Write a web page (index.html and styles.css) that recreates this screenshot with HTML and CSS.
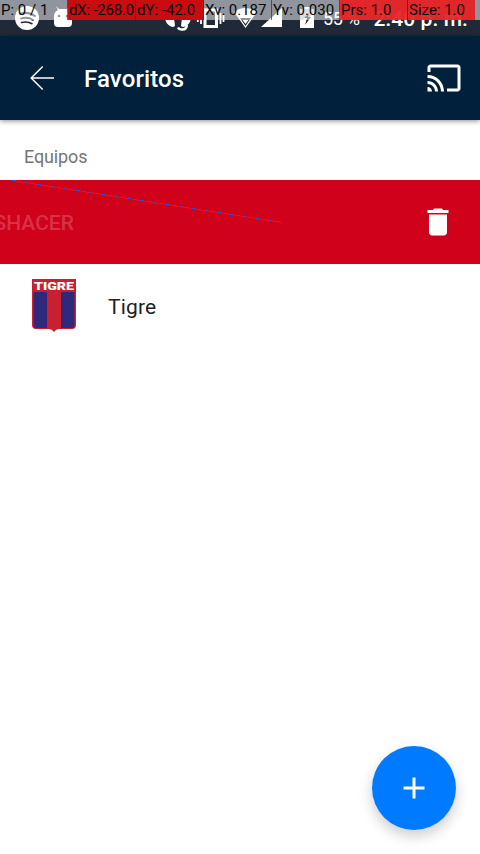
FILE: index.html
```html
<!DOCTYPE html>
<html lang="es">
<head>
<meta charset="utf-8">
<title>Favoritos</title>
<link rel="stylesheet" href="styles.css">
</head>
<body>
<div class="screen">
  <div class="status">
    <svg class="status-icons" viewBox="0 0 480 36" width="480" height="36" fill="#fff">
      <circle cx="27" cy="18" r="12"/>
      <g fill="none" stroke="#202938" stroke-linecap="round"><path d="M20 14q8-3 15 2" stroke-width="2"/><path d="M21 18.500q7-2 12 1.500" stroke-width="1.800"/><path d="M21.500 22.500q6-1.500 10.500 1.200" stroke-width="1.600"/></g>
      <path d="M54 16q0-4 4-6l-2-4 3 3h8l3-3-2 4q4 2 4 6v7q0 4-4 4H58q-4 0-4-4z"/><g fill="#202938"><circle cx="59" cy="16" r="1.300"/><circle cx="67" cy="16" r="1.300"/></g>
      <path d="M165 17h8q2 4 2 9-2 1.500-4 .5-6-3-6-9.500zM191 17h-8q-2 4-2 9 2 1.500 4 .5 6-3 6-9.500z"/>
      <path d="M187 25q-1 5-5 4.500-3 0-4-2" fill="none" stroke="#fff" stroke-width="2.500"/>
      <path d="M205 10h11.500v16.500H205z" fill="none" stroke="#fff" stroke-width="3"/><path d="M201 13v11M197.800 15v7M220.500 13v11M223.500 15v7" stroke="#fff" stroke-width="1.800"/>
      <path d="M234 12q11-8 23 0l-11.500 16z"/><path d="M240 18h11l-5.500 8z" fill="#202938"/><path d="M242.500 20h6l-3 4z"/>
      <path d="M282 8v19h-21z"/>
      <path d="M300 9h3V7h8v2h3v19h-14z"/><path d="M300 9h14v3l-5 6h-3l2-5-5 7h-3z" fill="#202938" fill-opacity=".3"/><path d="M304 18h3l-2 7 6-8h-3l1-4z" fill="#202938"/>
    </svg>
    <span class="battery">55 %</span>
    <span class="clock">2:40 p. m.</span>
    <div class="debug">
      <span>P: 0 / 1</span><span class="red tight">dX: -268.0</span><span class="red">dY: -42.0</span><span>Xv: 0.187</span><span>Yv: 0.030</span><span class="bright">Prs: 1.0</span><span class="bright">Size: 1.0</span>
    </div>
  </div>
  <header class="bar">
    <svg class="back" width="26" height="26" viewBox="0 0 26 26" fill="none" stroke="#fff" stroke-width="1.500"><path d="M24 13H1.500M12.700 1.500L1.200 13l11.500 11.500"/></svg>
    <h1>Favoritos</h1>
    <svg class="cast" width="36" height="36" viewBox="0 0 24 24" fill="#fff"><path d="M21 3H3c-1.100 0-2 .9-2 2v3h2V5h18v14h-7v2h7c1.100 0 2-.9 2-2V5c0-1.100-.9-2-2-2zM1 18v3h3c0-1.660-1.340-3-3-3zm0-4v2c2.760 0 5 2.240 5 5h2c0-3.870-3.130-7-7-7zm0-4v2c4.970 0 9 4.030 9 9h2c0-6.080-4.930-11-11-11z"/></svg>
  </header>
  <main>
    <h2>Equipos</h2>
    <div class="swiped">
      <span class="undo">DESHACER</span>
      <svg class="trash" width="36" height="36" viewBox="0 0 24 24" fill="#fff"><path d="M6 19c0 1.100.9 2 2 2h8c1.100 0 2-.9 2-2V7H6v12zM19 4h-3.500l-1-1h-5l-1 1H5v2h14V4z"/></svg>
      <svg class="trace" width="300" height="50" viewBox="0 0 300 50" fill="none" shape-rendering="crispEdges"><path d="M12 .5L282 42.500" stroke="#ff0010" stroke-width="1.100"/><path d="M12 .5L282 42.500" stroke="#1458ee" stroke-width="1.100" stroke-dasharray="3 3.500"/></svg>
    </div>
    <div class="team">
      <svg class="crest" width="44" height="54" viewBox="0 0 44 54"><path d="M0 0h44v46q0 4-4 4H27q-3 0-5 3-2-3-5-3H4q-4 0-4-4z" fill="#c92030"/><path d="M1.500 13H15v36H4q-2.500 0-2.500-3zM29 13h13.500v33q0 3-2.500 3H29z" fill="#30297b"/><text x="2" y="11" textLength="40" lengthAdjust="spacingAndGlyphs">TIGRE</text></svg>
      <span>Tigre</span>
    </div>
  </main>
  <button class="fab" aria-label="Agregar"><svg width="36" height="36" viewBox="0 0 36 36"><path d="M18 7.500v21M7.500 18h21" stroke="#fff" stroke-width="3"/></svg></button>
</div>
</body>
</html>
```
FILE: styles.css
```css
* { box-sizing: border-box; }
body { margin: 0; background: #fff; font-family: Roboto, "Liberation Sans", sans-serif; }
.screen { position: relative; width: 480px; height: 854px; overflow: hidden; display: flex; flex-direction: column; }
.status { position: relative; height: 36px; background: #202938; color: #fff; flex: none; }
.status-icons { display: block; }
.battery, .clock { position: absolute; line-height: 24px; white-space: nowrap; }
.battery { left: 323px; top: 7px; font-size: 18px; letter-spacing: -.3px; }
.clock { right: 12px; top: 7px; font-size: 21px; font-weight: 500; letter-spacing: .1px; }
.debug { position: absolute; inset: 0 0 auto; height: 20px; display: flex; background: rgba(255,255,255,.5); color: #080808; font-size: 15px; line-height: 20px; }
.debug span { width: 68px; padding-left: 1px; white-space: nowrap; border-right: 1px solid rgba(32,41,56,.65); }
.debug .red { background: #c80c10; border-right-color: #950f15; }
.debug .tight { letter-spacing: -.2px; }
.debug .bright { background: rgba(232,31,34,.93); }
.debug span:last-child { width: 67px; border: 0; }
.bar { position: relative; z-index: 1; height: 84px; flex: none; display: flex; align-items: center; padding: 0 18px 0 30px; background: #00203c; box-shadow: 0 1px 5px rgba(0,0,0,.45); }
h1 { margin: 2px auto 0 28px; color: #fff; font-size: 24px; font-weight: 500; line-height: 30px; letter-spacing: .12px; }
h2 { margin: 0; height: 60px; padding: 23px 24px 0; color: #757575; font-size: 18px; font-weight: 400; line-height: 27px; letter-spacing: -.12px; }
.swiped { position: relative; height: 84px; background: #d0021b; display: flex; align-items: center; justify-content: space-between; padding-right: 24px; overflow: hidden; }
.undo { margin-left: -32px; margin-top: 2px; font-size: 21px; font-weight: 500; color: rgba(255,255,255,.2); }
.trace { position: absolute; left: 0; top: 0; }
.team { height: 84px; display: flex; align-items: center; gap: 32px; padding-left: 32px; color: #212121; font-size: 21px; line-height: 30px; }
.team span { margin-top: 2px; letter-spacing: .15px; }
.crest text { fill: #fff; font: 900 11.5px Roboto, sans-serif; }
.fab { position: absolute; right: 24px; bottom: 24px; width: 84px; height: 84px; padding: 0; border: 0; border-radius: 50%; background: #007bff; display: grid; place-items: center; box-shadow: 0 6px 14px rgba(0,0,0,.2); }
```
